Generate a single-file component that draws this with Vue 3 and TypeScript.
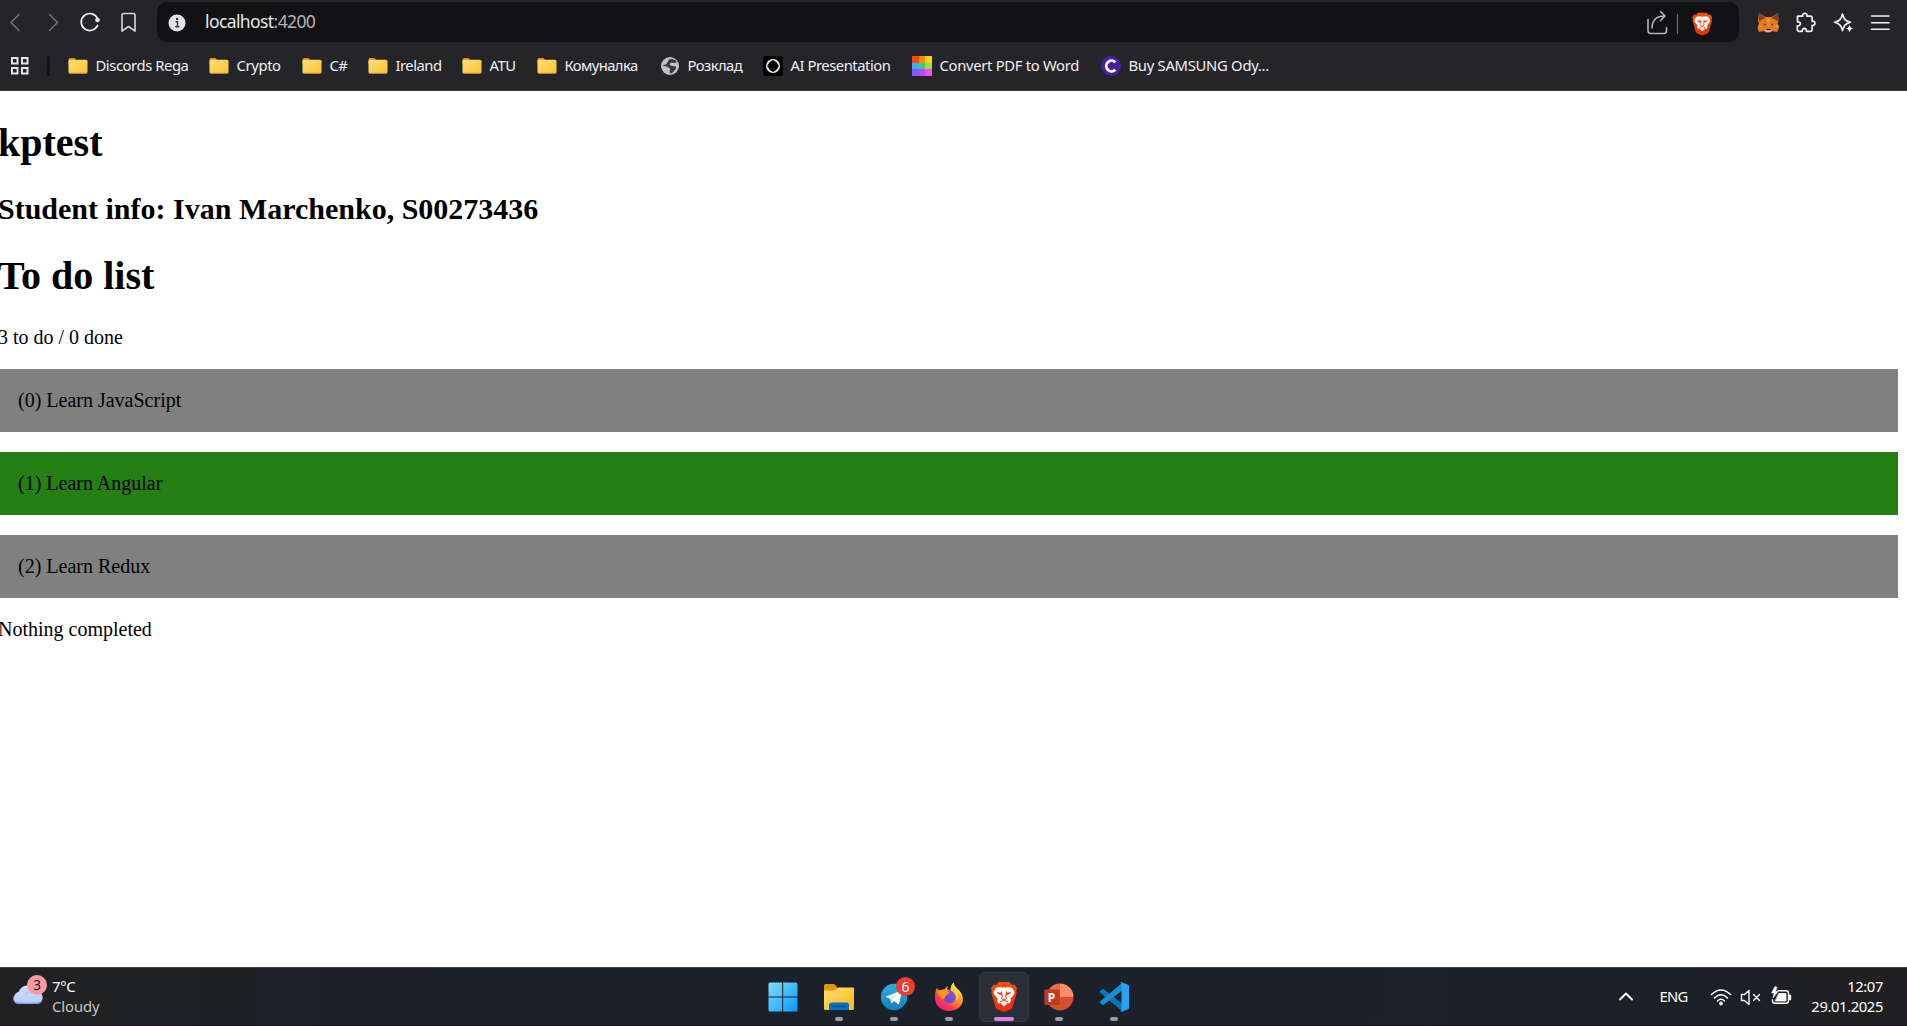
<script setup lang="ts">
interface Bookmark {
  label: string
  icon: 'folder' | 'globe' | 'ai' | 'pdf' | 'c'
  width: number
  tracking: number
}

interface Todo {
  id: number
  text: string
  active: boolean
}

const bookmarks: Bookmark[] = [
  { label: 'Discords Rega', icon: 'folder', width: 141, tracking: -0.43 },
  { label: 'Crypto', icon: 'folder', width: 93, tracking: -0.37 },
  { label: 'C#', icon: 'folder', width: 66, tracking: -0.5 },
  { label: 'Ireland', icon: 'folder', width: 94, tracking: -0.5 },
  { label: 'ATU', icon: 'folder', width: 75, tracking: -0.4 },
  { label: 'Комуналка', icon: 'folder', width: 123, tracking: -0.6 },
  { label: 'Розклад', icon: 'globe', width: 103, tracking: -0.55 },
  { label: 'AI Presentation', icon: 'ai', width: 149, tracking: -0.46 },
  { label: 'Convert PDF to Word', icon: 'pdf', width: 189, tracking: -0.31 },
  { label: 'Buy SAMSUNG Ody...', icon: 'c', width: 180, tracking: -0.28 },
]

const tiles = ['#f94a00', '#fb8c0b', '#fdd01c', '#2fb4f8', '#42cf68', '#93df50', '#8b55ff', '#bb48fa', '#f04df4']

const todos: Todo[] = [
  { id: 0, text: 'Learn JavaScript', active: false },
  { id: 1, text: 'Learn Angular', active: true },
  { id: 2, text: 'Learn Redux', active: false },
]
</script>

<template>
  <div class="screen">
    <header class="browser">
      <div class="toolbar">
        <svg class="nav-icons" width="157" height="44" viewBox="0 0 157 44" fill="none" stroke-linecap="round" stroke-linejoin="round">
          <path d="M19 14.5 11 22.5l8 8" stroke="#77767c" stroke-width="1.4" />
          <path d="m49.500 14.500 8 8-8 8" stroke="#77767c" stroke-width="1.4" />
          <path d="M97.600 18.800A8.500 8.500 0 1 0 97.500 25.500" stroke="#f2f2f4" stroke-width="1.7" />
          <circle cx="97.500" cy="20" r="2.300" fill="#f2f2f4" />
          <path d="M122 15.200c0-1 .7-1.700 1.700-1.700h9.600c1 0 1.700.7 1.700 1.700v16l-6.500-4.700-6.500 4.700z" stroke="#d8d7dc" stroke-width="1.6" />
        </svg>
        <div class="address">
          <svg width="18" height="18" viewBox="0 0 18 18">
            <circle cx="9" cy="9" r="8.500" fill="#e3e2e8" />
            <path d="M7.500 7.800h2v4.700M7.300 12.700h4" fill="none" stroke="#36353a" stroke-width="1.400" />
            <circle cx="9" cy="5" r="1.200" fill="#36353a" />
          </svg>
          <span class="url">localhost<span class="port">:4200</span></span>
          <svg class="address-tools" width="70" height="30" viewBox="0 0 70 30" fill="none">
            <path d="M1 11.500v11c0 2 1 3 3 3h12.500c2 0 3-1 3-3v-3" stroke="#b5b4b8" stroke-width="1.600" stroke-linecap="round" />
            <path d="M5 20c.2-8 4.500-12 12.500-12M13.500 3.500 18 8l-4.500 4.500" stroke="#b5b4b8" stroke-width="1.600" stroke-linecap="round" stroke-linejoin="round" />
            <path d="M30.500 6v20" stroke="#717074" stroke-width="1.200" />
            <svg x="45" y="4.500" width="20.500" height="23" viewBox="0 0 26 30">
              <use href="#brave-logo" />
            </svg>
          </svg>
        </div>
        <svg class="extensions" width="168" height="44" viewBox="0 0 168 44" fill="none" stroke-linejoin="round" stroke-linecap="round">
          <g stroke="none">
            <path d="m20 13 6.500 4h6l6.500-4 .5 7-1 4 1.500 4-2 4-5-1-2 1.500h-4L24.500 31 20 32l-1.500-4 1.500-4-1-4z" fill="#e27a22" />
            <path d="m20 13 6.500 5-6.500 3zm19 0-6.500 5 6.500 3z" fill="#873f1c" />
            <path d="m27 18 2.500 10 2.500-10zm-7 6-1 4 5-1zm19 0 1 4-5-1z" fill="#f58a29" />
            <path d="m24 23.500 3 .7-.8 1.600zm11 0-3 .7.8 1.600z" fill="#384250" />
            <path d="m26.500 29.500-.5 1.500 2 1h3l2-1-.5-1.500z" fill="#d6c0b0" />
            <path d="m27.500 29-.3 1.300h4.600l-.3-1.300z" fill="#25262c" />
          </g>
          <path d="M59 16.200h4.700c-.8-3.800 5-3.800 4.200 0h3.700c1 0 1.500.5 1.500 1.500v3.600c3.800-.9 3.800 5 0 4.100v4.400c0 1-.5 1.500-1.500 1.500h-4.200c.5-3.800-4.600-3.800-4.100 0h-3.500c-1 0-1.500-.5-1.500-1.500v-4c4 .7 4-4.700.2-3.900v-4.300c0-.9-.5-1.400.5-1.400z" stroke="#efeff2" stroke-width="1.700" />
          <path d="M103.500 14c1.300 5.200 2.800 6.800 8 8.300-5.200 1.500-6.700 3.100-8 8.300-1.300-5.200-2.800-6.800-8-8.300 5.200-1.500 6.700-3.100 8-8.300z" stroke="#efeff2" stroke-width="1.700" />
          <path d="M110.500 24.500c.6 2.600 1.300 3.300 3.800 4-2.500.7-3.200 1.400-3.800 4-.6-2.600-1.300-3.300-3.800-4 2.500-.7 3.200-1.400 3.800-4z" fill="#fff" />
          <path d="M132.500 16H150M132.500 22.700H150M132.500 29.300H150" stroke="#efeff2" stroke-width="1.600" />
        </svg>
      </div>

      <nav class="bookmarks">
        <svg class="apps" width="20" height="20" viewBox="0 0 20 20" fill="none" stroke="#e4e3e8" stroke-width="2">
          <path d="M2 2h5.500v5.500H2zM12 2h5.500v5.500H12zM2 12h5.500v5.500H2zM12 12h5.500v5.500H12z" />
        </svg>
        <i class="divider"></i>
        <a v-for="b in bookmarks" :key="b.label" class="bookmark" :style="{ width: b.width + 'px', letterSpacing: b.tracking + 'px' }">
          <svg v-if="b.icon === 'folder'" width="20" height="20" viewBox="0 0 20 20">
            <path d="M.5 3.500Q.5 2 2 2h4.500l2 2.500V8h-8z" fill="#d9920f" />
            <rect x=".5" y="3.800" width="19" height="13.700" rx="1.500" fill="url(#folder-fill)" />
            <path d="M1.500 17.200h17" stroke="#d39a20" stroke-width=".8" />
          </svg>
          <svg v-else-if="b.icon === 'globe'" width="20" height="20" viewBox="0 0 20 20">
            <circle cx="10" cy="10" r="9" fill="#bdc1c6" />
            <path d="M9 3.500 12 3l4 1.500.5 2-2.500.5-3-.5-1.500 2 2 1.500 4.500.5-.5 3-3.500 3.500-2 .5-.5-2.500 1-1.500-2-2-2-1-2.500-.5L2.500 9l3.500-.5 1.500-2z" fill="#36373b" />
          </svg>
          <svg v-else-if="b.icon === 'ai'" width="20" height="20" viewBox="0 0 20 20">
            <rect width="20" height="20" rx="2" fill="#000" />
            <circle cx="10" cy="10" r="7" fill="#eee" />
            <path d="m10 4 3.300 2L15.800 10l-2.500 4-3.300 2-3.300-2L4.200 10l2.500-4z" fill="#050505" />
          </svg>
          <svg v-else-if="b.icon === 'pdf'" width="20" height="20" viewBox="0 0 20 20" shape-rendering="crispEdges">
            <rect v-for="(t, i) in tiles" :key="t" :x="(i % 3) * 6.667" :y="Math.floor(i / 3) * 6.667" width="6.700" height="6.700" :fill="t" />
          </svg>
          <svg v-else width="20" height="20" viewBox="0 0 20 20">
            <circle cx="10" cy="10" r="10" fill="#47209e" />
            <path d="M14.300 6.200a5.300 5.300 0 1 0 0 7.600" fill="none" stroke="#fff" stroke-width="2.800" />
          </svg>
          <span class="label">{{ b.label }}</span>
        </a>
      </nav>
    </header>

    <main class="page">
      <h1 class="title">kptest</h1>
      <h2>Student info: Ivan Marchenko, S00273436</h2>
      <h1>To do list</h1>
      <p class="summary">3 to do / 0 done</p>
      <div v-for="t in todos" :key="t.id" class="todo" :class="{ active: t.active }">({{ t.id }}) {{ t.text }}</div>
      <p>Nothing completed</p>
    </main>

    <footer class="taskbar">
      <div class="weather">
        <svg width="36" height="36" viewBox="0 0 36 36">
          <path d="M7 30a6.500 6.500 0 0 1 0-12.500C9 11 19 9 22.500 16c5 .5 8 3 8 7.500 0 4-2.500 6.500-6.500 6.500z" fill="url(#cloud-fill)" />
          <path d="M1 25c1-7 10-9 14-4 4-4 11-4 15.500 1 .5 5-2 8-6.500 8H7c-3 0-5-1.500-6-5z" fill="#c8dcfa" opacity=".75" />
          <path d="M2 27c3 2 23 2 28 0-1 2-3 3-6 3H7c-2 0-4-1-5-3z" fill="#6e98e8" opacity=".7" />
          <circle cx="25" cy="11" r="10" fill="#ff99a4" />
          <text x="25" y="16" text-anchor="middle" font-size="13.500" fill="#17171a">3</text>
        </svg>
        <div class="weather-text"><div>7°C</div><div class="cond">Cloudy</div></div>
      </div>

      <div class="apps-row">
        <div class="slot start">
          <svg width="30" height="30" viewBox="0 0 30 30">
            <path d="M.5 2Q.5.500 2 .5h12.200v14H.5zM15.200.500H28q1.500 0 1.500 1.500v12.500H15.200zM.5 15.500h13.700v14H2Q.5 29.500.5 28zM15.200 15.500h14.300V28q0 1.500-1.500 1.500H15.200z" fill="url(#win-fill)" />
          </svg>
        </div>
        <div class="slot">
          <svg width="30" height="30" viewBox="0 0 30 30">
            <path d="M0 4q0-2 2-2h7q1.500 0 2.500 1.200L13 5v4H0z" fill="#e09b06" />
            <path d="M0 8.500h9.500q1.500 0 2.500-1l2-2h15q1 0 1 1v20q0 1.500-1.500 1.500h-27Q0 28 0 26.500z" fill="url(#explorer-fill)" />
            <path d="M5 28v-5q0-2.500 2.500-2.500h15q2.500 0 2.500 2.500v5z" fill="#0b6fc5" />
            <path d="M9 24.500h12" stroke="#0a4c8c" stroke-width="1.300" stroke-linecap="round" />
          </svg>
          <i class="mark"></i>
        </div>
        <div class="slot">
          <svg width="30" height="30" viewBox="0 0 30 30">
            <circle cx="15" cy="15" r="13.200" fill="url(#tg-fill)" />
            <path d="m6.500 14.700 15.500-6q1-.3.800.8l-2.600 12q-.3 1-1.200.4l-4-3-2 2q-.6.500-.8-.5l-1.100-4-4.300-1.300q-.8-.2-.3-.4z" fill="#fff" />
            <path d="m11.500 16 7.500-4.800-6 5.600-.5 3.800z" fill="#b8d8ec" />
          </svg>
          <b class="badge">6</b>
          <i class="mark"></i>
        </div>
        <div class="slot">
          <svg width="30" height="30" viewBox="0 0 30 30">
            <path d="M2.500 6 6 9q2-2 5-2 .5-2 3-3l-1 3q2 1 3.500 2Q16 4 19.500.5 20 4 23 6.500q6 5 6 10.500c0 7-6 12-14 12S1 23.500 1 16q0-6 1.500-10z" fill="url(#fox-fill)" />
            <circle cx="15.500" cy="15" r="6.200" fill="url(#orb-fill)" />
            <path d="M3 9q5-2 8 0 3 0 5 2-3 1-4 3-2 1-1.500 3.500Q5 16 3 9z" fill="#ff941f" />
            <path d="M17 8q0-5 2.500-7.500Q20 4 23 6.500q4.500 4 4.500 9-1-3-3.500-5 1 5-1 8-.5-7-6-10.500z" fill="#ffd72f" />
          </svg>
          <i class="mark"></i>
        </div>
        <div class="slot current">
          <svg width="26" height="30" viewBox="0 0 26 30">
            <g id="brave-logo">
              <path d="M7.500 0h11L21 3l2.500-.3L26 6l-.8 3 .3 2-4 14q-.5 1.500-2 2.500L13 30l-6.500-2.500q-1.500-1-2-2.500l-4-14 .3-2L0 6l2.500-3.300L5 3z" fill="url(#brave-fill)" />
              <path d="M8.500 5q4.500 1.200 9 0l3.500.8 2.300 3.700-.3 2.700-3.600 4.500.6 2.300-1.500 2.500-2.500-.8-3 2.300 0 0-3-2.300-2.500.8L6 19l.6-2.300L3 12.200l-.3-2.700L5 5.800z" fill="#fff" />
              <path d="m9.500 21.500 3.500-1.500 3.500 1.500-3.500 3z" fill="#fff" />
              <path d="m6 10.600 4.300.5.300 2.200zm14 0-4.300.5-.3 2.200z" fill="#f83a0c" stroke="#f83a0c" stroke-width=".6" />
              <path d="m10.500 9.500.8 5-.8 2 2.500 1.400 2.500-1.400-.8-2 .8-5M9 19.800l4-1.600 4 1.600" fill="none" stroke="#f83a0c" stroke-width="1" />
            </g>
          </svg>
          <i class="mark"></i>
        </div>
        <div class="slot">
          <svg width="30" height="30" viewBox="0 0 30 30">
            <path d="M16 1.500A13.500 13.500 0 0 0 2.500 15H16z" fill="#ed6c47" />
            <path d="M16 1.500A13.500 13.500 0 0 1 29.500 15H16z" fill="#ff8f6b" />
            <path d="M2.500 15a13.500 13.500 0 0 0 27 0z" fill="#d35230" />
            <rect x=".3" y="7.500" width="15.500" height="15.500" rx="1.500" fill="#c23b1c" />
            <text x="7.500" y="19.500" text-anchor="middle" font-size="12" font-weight="700" fill="#fff">P</text>
          </svg>
          <i class="mark"></i>
        </div>
        <div class="slot">
          <svg width="30" height="30" viewBox="0 0 30 30">
            <path d="m1 9 2-1.600q1-.6 2 .1l18 13.900V29L1 10.500Q.3 9.700 1 9z" fill="#0878bd" />
            <path d="m1 21 2 1.600q1 .6 2-.1L23 8.600V1L1 19.500q-.7.800 0 1.500z" fill="#168dd6" />
            <path d="M21 .5q.8-.8 2-.2l6 2.500q1 .5 1 1.500v21.500q0 1-1 1.500l-6 2.500q-1.200.5-2-.3 1.500.5 1.500-1.500V2q0-2-1.500-1.500z" fill="#2ba1f1" />
          </svg>
          <i class="mark"></i>
        </div>
      </div>

      <div class="tray">
        <svg class="chevron" width="16" height="12" viewBox="0 0 16 12" fill="none" stroke="#fff" stroke-width="1.900" stroke-linecap="round" stroke-linejoin="round"><path d="m2 8.500 6-6 6 6" /></svg>
        <span class="lang">ENG</span>
        <svg class="status" width="82" height="24" viewBox="0 0 82 24" fill="none" stroke="#fff" stroke-width="1.500" stroke-linecap="round" stroke-linejoin="round">
          <path d="M1.500 9.500q9.500-9 19 0M4.500 13q6.500-6.500 13 0M7.500 16q3.500-3.500 7 0" />
          <circle cx="11" cy="18.500" r="1.500" fill="#fff" stroke-width="1" />
          <path d="M31.500 9.500h3l4.500-4v14l-4.500-4h-3zM43.500 9.500l6 6m0-6-6 6" stroke-width="1.400" />
          <path d="M68 5.800h8q2.500 0 2.500 2.500v7.500q0 2.500-2.500 2.500H65q-2.500 0-2.500-2.500v-1M79 10.500h1.500v4H79z" stroke-width="1.400" />
          <path d="M69 8.500h7V16H65.500z" fill="#fff" stroke-width=".8" />
          <path d="m65 1.500-3.500 6.500H64l-1 5 5-6.500h-2.500l1.500-4z" fill="#fff" stroke-width=".5" />
        </svg>
        <div class="clock"><div class="time">12:07</div><div class="date">29.01.2025</div></div>
      </div>
    </footer>

    <svg class="defs" width="0" height="0">
      <defs>
        <linearGradient id="folder-fill" x1="0" y1="0" x2="1" y2="1"><stop stop-color="#ffdf76" /><stop offset="1" stop-color="#fbc134" /></linearGradient>
        <linearGradient id="explorer-fill" x1="0" y1="0" x2="1" y2="1"><stop stop-color="#ffdc70" /><stop offset="1" stop-color="#fbbc13" /></linearGradient>
        <linearGradient id="cloud-fill" x1="0" y1="0" x2="0" y2="1"><stop stop-color="#dbe9ff" /><stop offset="1" stop-color="#84a9ed" /></linearGradient>
        <linearGradient id="win-fill" x1="0" y1="0" x2="1" y2="1"><stop stop-color="#83e0fb" /><stop offset=".5" stop-color="#40bdfb" /><stop offset="1" stop-color="#0a94ff" /></linearGradient>
        <linearGradient id="tg-fill" x1="0" y1="0" x2="0" y2="1"><stop stop-color="#31aee2" /><stop offset="1" stop-color="#1681bd" /></linearGradient>
        <linearGradient id="brave-fill" x1="0" y1="0" x2="0" y2="1"><stop stop-color="#fd4d0a" /><stop offset="1" stop-color="#ef2b0c" /></linearGradient>
        <linearGradient id="fox-fill" x1="1" y1="0" x2=".2" y2="1"><stop stop-color="#fff044" /><stop offset=".45" stop-color="#ff9724" /><stop offset=".75" stop-color="#ff3b4f" /><stop offset="1" stop-color="#eb1686" /></linearGradient>
        <linearGradient id="orb-fill" x1="1" y1="0" x2="0" y2="1"><stop stop-color="#a04be8" /><stop offset="1" stop-color="#5048c4" /></linearGradient>
      </defs>
    </svg>
  </div>
</template>

<style>
body {
  margin: 0;
  overflow: hidden;
}
</style>

<style scoped>
.screen {
  display: flex;
  flex-direction: column;
  width: 1907px;
  height: 1026px;
  overflow: hidden;
  background: #fff;
  font-family: "Noto Sans", "Open Sans", sans-serif;
}
svg {
  display: block;
  flex: none;
}
.browser {
  height: 91px;
  flex: none;
  box-sizing: border-box;
  background: #252429;
  border-bottom: 1px solid #36353a;
}
.toolbar {
  display: flex;
  height: 44px;
}
.address {
  display: flex;
  align-items: center;
  box-sizing: border-box;
  width: 1582px;
  height: 40px;
  margin-top: 2px;
  padding: 2px 22px 0 11px;
  border-radius: 10px;
  background: #111113;
}
.url {
  margin-left: 19px;
  margin-top: -4px;
  color: #e8e8ec;
  font-size: 17.5px;
  letter-spacing: -0.6px;
}
.port {
  color: #b5b4ba;
}
.address-tools {
  margin-left: auto;
}
.bookmarks {
  display: flex;
  align-items: center;
  height: 44px;
  padding-left: 10px;
}
.divider {
  width: 3px;
  height: 20px;
  margin: 0 18px 0 17px;
  border-radius: 2px;
  background: #111113;
}
.bookmark {
  display: flex;
  flex: none;
  align-items: center;
  gap: 7.5px;
  color: #f1f0f4;
  font-size: 14.8px;
  line-height: 20px;
  white-space: nowrap;
}
.label {
  margin-top: -2px;
}
.page {
  display: flow-root;
  flex: 1;
  margin-left: -2px;
  padding-right: 9px;
  color: #000;
  font-family: "Liberation Serif", "Times New Roman", serif;
  font-size: 20px;
  line-height: 23px;
}
h1 {
  margin: 27px 0;
  font-size: 40px;
  line-height: 46px;
}
h1.title {
  margin: 29px 0 26px;
}
h2 {
  margin: 26px 0 27px;
  font-size: 30px;
  line-height: 34px;
}
p {
  margin: 20px 0;
}
.todo {
  margin-bottom: 20px;
  padding: 20px;
  background: #808080;
}
.todo.active {
  background: #267f13;
}
.taskbar {
  display: flex;
  flex: none;
  box-sizing: border-box;
  height: 59px;
  border-top: 1px solid #424247;
  border-bottom: 1px solid #190e20;
  background: linear-gradient(90deg, #222223 0, #1f2124 10%, #1b212b 35%, #1b222c 75%, #1c2128 88%, #211f21 100%);
  color: #fff;
}
.weather {
  display: flex;
  box-sizing: border-box;
  width: 756.5px;
  padding: 6px 0 0 12px;
}
.weather-text {
  margin: 2px 0 0 4px;
  font-size: 14.8px;
  line-height: 20px;
  letter-spacing: -0.3px;
}
.cond {
  color: #c6c6c8;
  letter-spacing: -0.05px;
}
.apps-row {
  display: flex;
  padding-top: 4px;
}
.slot {
  position: relative;
  display: flex;
  align-items: center;
  justify-content: center;
  box-sizing: border-box;
  width: 50px;
  height: 50px;
  margin: 0 2.5px;
}
.slot.start {
  padding-right: 2px;
}
.current {
  border: 1px solid #343941;
  border-radius: 6px;
  background: #29303a;
}
.mark {
  position: absolute;
  bottom: 1px;
  left: 21px;
  width: 8px;
  height: 4px;
  border-radius: 2px;
  background: #9a9da3;
}
.current .mark {
  bottom: 0;
  left: 14px;
  width: 20px;
  background: #e382dc;
}
.badge {
  position: absolute;
  top: 5px;
  left: 27px;
  width: 19px;
  height: 19px;
  border-radius: 50%;
  background: #f23c34;
  font-size: 14px;
  font-weight: 400;
  line-height: 19px;
  text-align: center;
}
.tray {
  display: flex;
  align-items: center;
  flex: 1;
  padding: 0 24px 0 476px;
  font-size: 14.8px;
}
.lang {
  width: 50px;
  margin-left: 26px;
  margin-top: -1px;
  letter-spacing: -0.7px;
}
.clock {
  margin: -2px 0 0 auto;
  line-height: 20px;
  letter-spacing: -0.4px;
  text-align: right;
}
.defs {
  position: absolute;
}
</style>
